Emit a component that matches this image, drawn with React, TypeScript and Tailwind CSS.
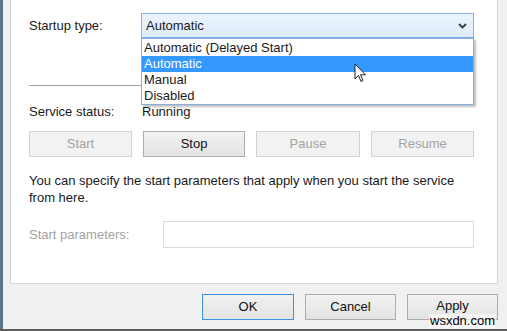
import React from "react";

const font = { fontFamily: '"Liberation Sans", Arial, sans-serif' };

function Btn({ children, disabled, def, w }: { children: React.ReactNode; disabled?: boolean; def?: boolean; w: string }) {
  const base = "flex items-center justify-center text-[13px] box-border border ";
  let cls = "";
  if (disabled) cls = "bg-[#f2f2f2] border-[#d3d3d3] text-[#a3a3a3]";
  else if (def) cls = "bg-gradient-to-b from-[#f2f2f2] to-[#e3e3e3] border-[#3c94e6] text-[#111]";
  else cls = "bg-gradient-to-b from-[#f2f2f2] to-[#e3e3e3] border-[#adadad] text-[#111]";
  return <div className={base + cls + " " + w}>{children}</div>;
}

export default function App() {
  return (
    <div className="relative w-[507px] h-[331px] overflow-hidden bg-[#f0f0f0] flex text-[#1a1a1a]" style={font}>
      <div className="w-[3px] h-full bg-[#55758f]" />
      <div className="flex-1 flex flex-col">
        <div className="ml-[7px] w-[488px] h-[284px] bg-white border-x border-b border-[#d4d4d4] box-border pl-[18px] pt-[13px]">
          <div className="flex items-center h-[25px]">
            <div className="w-[112px] text-[13px]">Startup type:</div>
            <div className="w-[333px] h-[25px] box-border border border-[#7eb4ea] bg-gradient-to-b from-[#ecf4fc] to-[#dcecfc] flex items-center pl-[4px] pr-[6px] text-[13px]">
              <span className="flex-1">Automatic</span>
              <svg width="9" height="6" viewBox="0 0 9 6">
                <path d="M1 1 L4.5 4.5 L8 1" fill="none" stroke="#3a3a3a" strokeWidth="1.8" />
              </svg>
            </div>
          </div>
          <div className="mt-[47px] h-px w-[445px] bg-[#a0a0a0]" />
          <div className="mt-[18px] flex items-center h-[16px] text-[13px]">
            <div className="w-[113px]">Service status:</div>
            <div>Running</div>
          </div>
          <div className="mt-[11px] flex gap-[11px] h-[26px]">
            <Btn disabled w="w-[103px]">Start</Btn>
            <Btn w="w-[102px]">Stop</Btn>
            <Btn disabled w="w-[104px]">Pause</Btn>
            <Btn disabled w="w-[103px]">Resume</Btn>
          </div>
          <div className="mt-[15px] text-[13px] leading-[17px]">
            <div>You can specify the start parameters that apply when you start the service</div>
            <div>from here.</div>
          </div>
          <div className="mt-[15px] flex items-center h-[27px]">
            <div className="w-[134px] text-[13px] text-[#a3a3a3]">Start parameters:</div>
            <div className="w-[311px] h-[27px] box-border border border-[#dadada] bg-white" />
          </div>
        </div>
        <div className="mt-[10px] flex justify-end gap-[11px] pr-[9px] h-[26px]">
          <Btn def w="w-[92px]">OK</Btn>
          <Btn w="w-[91px]">Cancel</Btn>
          <Btn w="w-[91px]">
            <span className="-mt-[3px]">Apply</span>
          </Btn>
        </div>
      </div>
      <div className="absolute left-0 right-0 bottom-0 h-[2px] bg-[#5c5c5c]" />

      {/* dropdown list */}
      <div className="absolute left-[141px] top-[38px] w-[333px] h-[67px] box-border border border-[#88aedb] bg-white text-[13px] shadow-[2px_2px_2px_rgba(0,0,0,0.25)]">
        <div className="h-[17px] leading-[17px] pl-[2px]">Automatic (Delayed Start)</div>
        <div className="h-[16px] leading-[16px] pl-[2px] bg-[#3399ff] text-white">Automatic</div>
        <div className="h-[16px] leading-[16px] pl-[2px]">Manual</div>
        <div className="h-[16px] leading-[16px] pl-[2px]">Disabled</div>
      </div>

      {/* cursor */}
      <svg className="absolute left-[354px] top-[63px]" width="13" height="20" viewBox="0 0 13 20">
        <path d="M1 1 L1 16 L4.5 12.5 L7 18.5 L9 17.6 L6.6 11.8 L11.5 11.8 Z" fill="white" stroke="#222" strokeWidth="1" strokeLinejoin="round" />
      </svg>

      {/* watermark */}
      <div className="absolute left-[429px] top-[314px] text-[13px] leading-[14px] text-black bg-white/60 px-[1px]" style={font}>
        wsxdn.com
      </div>
    </div>
  );
}
